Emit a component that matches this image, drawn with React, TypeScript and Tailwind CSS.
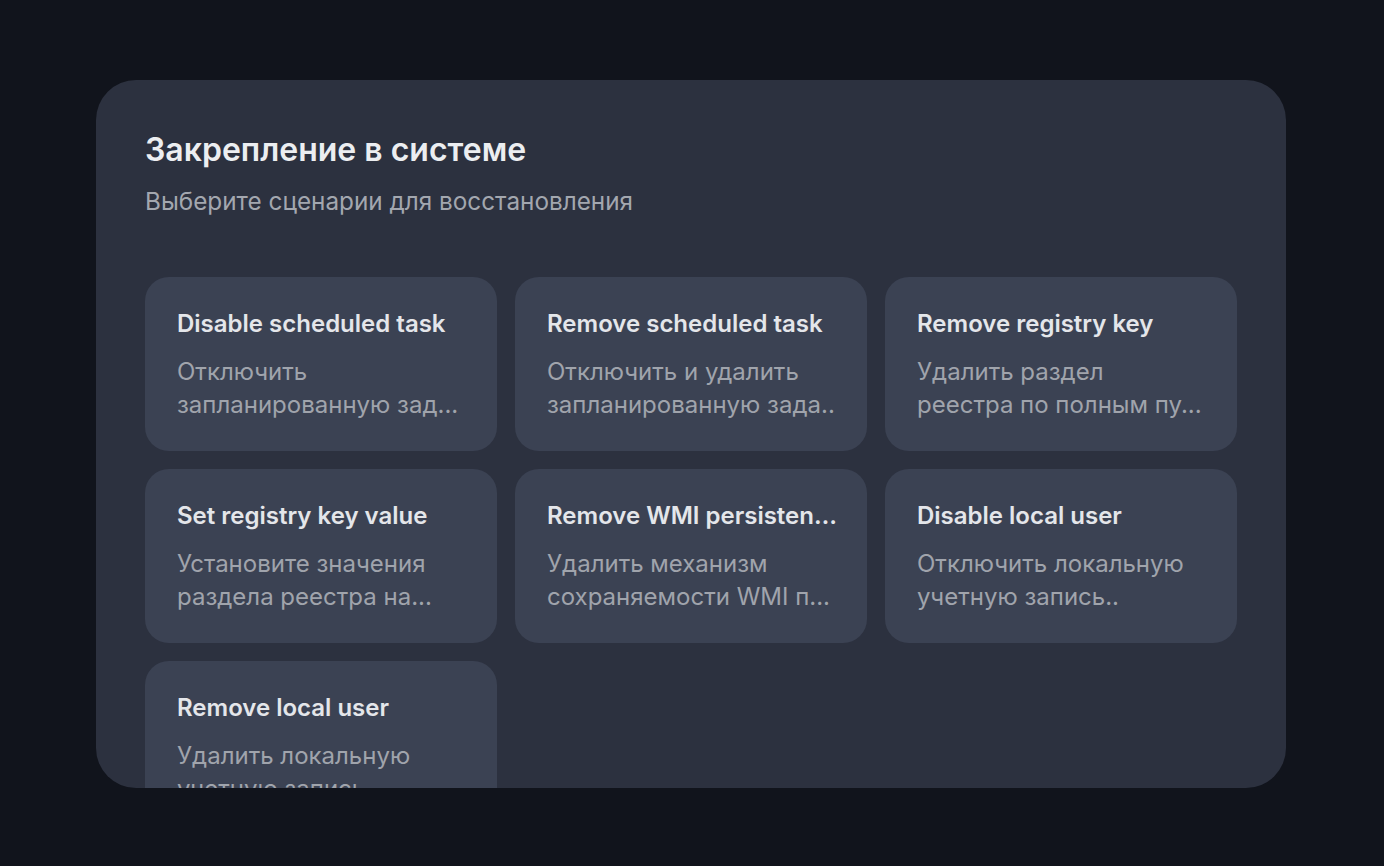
const scenarios = [
  { title: 'Disable scheduled task', desc: 'Отключить запланированную зад...' },
  { title: 'Remove scheduled task', desc: 'Отключить и удалить запланированную зада..' },
  { title: 'Remove registry key', desc: 'Удалить раздел реестра по полным пу...' },
  { title: 'Set registry key value', desc: 'Установите значения раздела реестра на...' },
  { title: 'Remove WMI persisten…', desc: 'Удалить механизм сохраняемости WMI п...' },
  { title: 'Disable local user', desc: 'Отключить локальную учетную запись..' },
  { title: 'Remove local user', desc: 'Удалить локальную учетную запись..' },
];

function ScenarioCard({ title, desc }: { title: string; desc: string }) {
  return (
    <div className="h-[174px] rounded-[24px] bg-[#3b4253] px-8 pt-[31px] pb-[30px]">
      <div className="whitespace-nowrap text-[24px] font-semibold leading-8 text-[#e4e6ea]">{title}</div>
      <p className="mt-[15px] line-clamp-2 text-[24px] leading-[33px] text-[#a0a4ac]">{desc}</p>
    </div>
  );
}

export default function App() {
  return (
    <div
      className="h-[866px] w-full bg-[#11141c] pt-20"
      style={{ fontFamily: 'Inter, "Noto Sans", sans-serif' }}
    >
      <div className="ml-24 h-[708px] w-[1190px] overflow-hidden rounded-[40px] bg-[#2c313f] px-[49px] pt-[52px]">
        <h1 className="text-[32px] font-semibold leading-9 text-[#eceef1]">Закрепление в системе</h1>
        <p className="mt-[19px] text-[24.3px] leading-7 text-[#a3a7af]">Выберите сценарии для восстановления</p>
        <div className="mt-[62px] grid grid-cols-3 gap-[18px]">
          {scenarios.map((s) => (
            <ScenarioCard key={s.title} title={s.title} desc={s.desc} />
          ))}
        </div>
      </div>
    </div>
  );
}
